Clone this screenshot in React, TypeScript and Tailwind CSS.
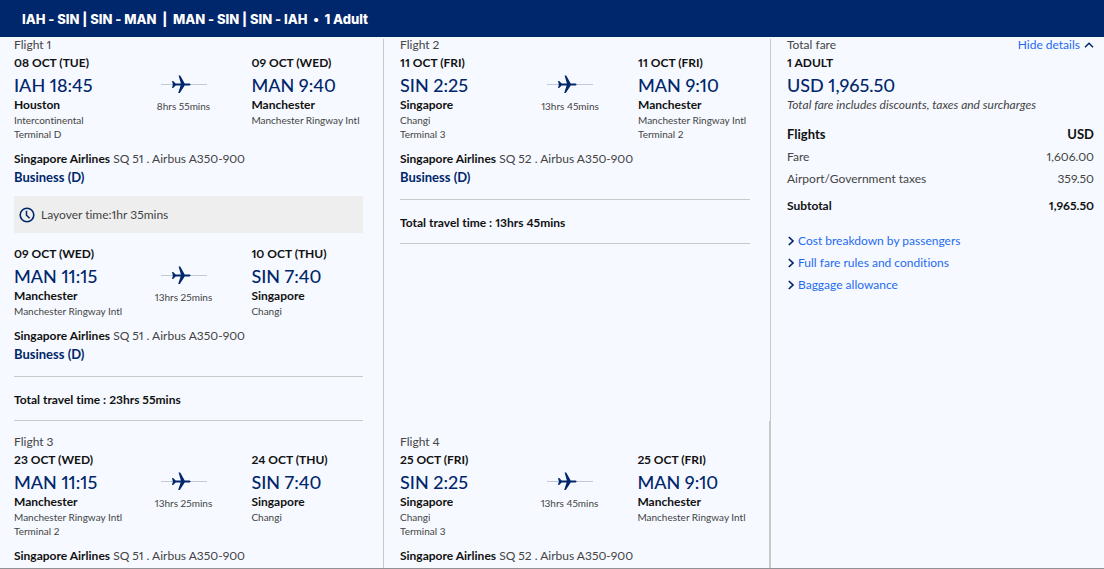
import React from 'react';

type Stop = { date: string; time: string; city: string; details: string[] };
type LegData = { from: Stop; to: Stop; duration: string; flightNo: string; cabin?: string };

const stop = (date: string, time: string, city: string, ...details: string[]): Stop => ({ date, time, city, details });

const flight1: LegData[] = [
  {
    from: stop('08 OCT (TUE)', 'IAH 18:45', 'Houston', 'Intercontinental', 'Terminal D'),
    to: stop('09 OCT (WED)', 'MAN 9:40', 'Manchester', 'Manchester Ringway Intl'),
    duration: '8hrs 55mins',
    flightNo: 'SQ 51',
    cabin: 'Business (D)',
  },
  {
    from: stop('09 OCT (WED)', 'MAN 11:15', 'Manchester', 'Manchester Ringway Intl'),
    to: stop('10 OCT (THU)', 'SIN 7:40', 'Singapore', 'Changi'),
    duration: '13hrs 25mins',
    flightNo: 'SQ 51',
    cabin: 'Business (D)',
  },
];

const flight2: LegData = {
  from: stop('11 OCT (FRI)', 'SIN 2:25', 'Singapore', 'Changi', 'Terminal 3'),
  to: stop('11 OCT (FRI)', 'MAN 9:10', 'Manchester', 'Manchester Ringway Intl', 'Terminal 2'),
  duration: '13hrs 45mins',
  flightNo: 'SQ 52',
  cabin: 'Business (D)',
};

const flight3: LegData = {
  from: stop('23 OCT (WED)', 'MAN 11:15', 'Manchester', 'Manchester Ringway Intl', 'Terminal 2'),
  to: stop('24 OCT (THU)', 'SIN 7:40', 'Singapore', 'Changi'),
  duration: '13hrs 25mins',
  flightNo: 'SQ 51',
};

const flight4: LegData = {
  from: stop('25 OCT (FRI)', 'SIN 2:25', 'Singapore', 'Changi', 'Terminal 3'),
  to: stop('25 OCT (FRI)', 'MAN 9:10', 'Manchester', 'Manchester Ringway Intl'),
  duration: '13hrs 45mins',
  flightNo: 'SQ 52',
};

function PlaneIcon() {
  return (
    <svg className="block h-5 w-[46px]" viewBox="0 0 46 20" aria-hidden="true">
      <path d="M0 10.5H46" stroke="#c3c9d6" />
      <path
        fill="#00266b"
        d="M11 7h1.1l2.6 2.6h5.2L17.6 1.6h1.6l4.5 8h3.8c1.3 0 2.1.4 2.1.9s-.8 1-2.1 1h-3.8L18.8 19h-1.6l2.4-7.5h-4.9L12.1 14H11l.9-3.5z"
      />
    </svg>
  );
}

function ClockIcon() {
  return (
    <svg className="h-4 w-4 shrink-0" viewBox="0 0 16 16" fill="none" stroke="#00266b" aria-hidden="true">
      <circle cx="8" cy="8" r="6.8" strokeWidth="1.6" />
      <path d="M7.5 3.8V8.2L10.6 11.3" strokeWidth="1.5" />
    </svg>
  );
}

function Chevron({ up = false }: { up?: boolean }) {
  return up ? (
    <svg className="h-2 w-2.5 shrink-0" viewBox="0 0 10 8" fill="none" stroke="#00266b" strokeWidth="1.5" aria-hidden="true">
      <path d="M1 6.2L5 2.2L9 6.2" />
    </svg>
  ) : (
    <svg className="h-2.5 w-2 shrink-0" viewBox="0 0 8 10" fill="none" stroke="#00266b" strokeWidth="1.7" aria-hidden="true">
      <path d="M1.8 1L6 5L1.8 9" />
    </svg>
  );
}

function StopInfo({ data }: { data: Stop }) {
  return (
    <div className="whitespace-nowrap">
      <p className="text-xs leading-5 font-bold text-[#111]">{data.date}</p>
      <p className="font-['Lato_Medium','Lato',sans-serif] text-lg leading-6 font-medium text-[#00266b]">{data.time}</p>
      <p className="text-xs leading-4 font-bold text-[#111]">{data.city}</p>
      {data.details.map((line) => (
        <p key={line} className="text-[10px] leading-[14px]">{line}</p>
      ))}
    </div>
  );
}

function Leg({ data }: { data: LegData }) {
  return (
    <div>
      <div className="grid grid-cols-[36fr_24fr_40fr]">
        <StopInfo data={data.from} />
        <div className="flex flex-col items-center pt-[21px] pl-1">
          <PlaneIcon />
          <p className="mt-[5px] text-[10px] leading-[14px] whitespace-nowrap">{data.duration}</p>
        </div>
        <div className="pl-7">
          <StopInfo data={data.to} />
        </div>
      </div>
      <p className="mt-2.5 text-xs leading-4">
        <b className="font-bold text-[#111]">Singapore Airlines</b> {data.flightNo} . Airbus A350-900
      </p>
      {data.cabin && <p className="text-[13px] leading-5 font-bold text-[#00266b]">{data.cabin}</p>}
    </div>
  );
}

function FlightTitle({ children }: { children: React.ReactNode }) {
  return <h2 className="mb-0.5 text-xs leading-3">{children}</h2>;
}

function TravelTime({ value }: { value: string }) {
  return (
    <p className="mt-3 border-y border-[#c9c9c9] pt-3.5 pb-3 text-xs leading-[17px] font-bold text-[#111]">
      Total travel time : {value}
    </p>
  );
}

const links = ['Cost breakdown by passengers', 'Full fare rules and conditions', 'Baggage allowance'];

export default function App() {
  return (
    <div className="border-b border-[#8f9196] bg-[#f6f9ff] font-['Lato',sans-serif] text-[#444] proportional-nums [font-variant-ligatures:none]">
      <header className="flex h-[37px] items-center bg-[#00266b] px-[22px]">
        <h1 className="font-['Inter','Lato',sans-serif] text-[13px] leading-4 font-extrabold whitespace-pre text-white">
          {'IAH - SIN | SIN - MAN  |  MAN - SIN | SIN - IAH  •  1 Adult'}
        </h1>
      </header>
      <main className="grid grid-cols-[384fr_387fr_333fr] pt-0.5">
        <section className="border-r border-[#c9c9c9] pr-5 pl-3.5">
          <FlightTitle>Flight 1</FlightTitle>
          <Leg data={flight1[0]} />
          <div className="mt-[9px] mb-[11px] flex h-[37px] items-center gap-1.5 bg-[#eee] px-[5px] text-xs">
            <ClockIcon />
            <p>Layover time:1hr 35mins</p>
          </div>
          <Leg data={flight1[1]} />
          <TravelTime value="23hrs 55mins" />
        </section>

        <section className="border-r border-[#c9c9c9] pr-5 pl-4">
          <FlightTitle>Flight 2</FlightTitle>
          <Leg data={flight2} />
          <TravelTime value="13hrs 45mins" />
        </section>

        <aside className="row-span-2 pr-2.5 pl-4 text-xs">
          <div className="mb-0.5 flex items-center justify-between leading-3">
            <h2>Total fare</h2>
            <button type="button" className="flex items-center gap-1 text-[#1f6bf0]">
              Hide details <Chevron up />
            </button>
          </div>
          <p className="leading-5 font-bold text-[#111]">1 ADULT</p>
          <p className="font-['Lato_Medium','Lato',sans-serif] text-lg leading-6 font-medium text-[#00266b]">USD 1,965.50</p>
          <p className="leading-4 italic">Total fare includes discounts, taxes and surcharges</p>
          <table className="mt-2.5 w-full leading-[22px]">
            <thead>
              <tr className="text-[13px] text-[#111]">
                <th scope="col" className="pb-px text-left font-bold">Flights</th>
                <th scope="col" className="pb-px text-right font-bold">USD</th>
              </tr>
            </thead>
            <tbody>
              <tr>
                <td>Fare</td>
                <td className="text-right">1,606.00</td>
              </tr>
              <tr>
                <td>Airport/Government taxes</td>
                <td className="text-right">359.50</td>
              </tr>
            </tbody>
            <tfoot>
              <tr className="text-[#111]">
                <th scope="row" className="pt-[5px] text-left font-bold">Subtotal</th>
                <td className="pt-[5px] text-right font-bold">1,965.50</td>
              </tr>
            </tfoot>
          </table>
          <ul className="mt-[13px] leading-[22px]">
            {links.map((label) => (
              <li key={label}>
                <a href="#" className="flex items-center gap-[3px] text-[#1f6bf0]">
                  <Chevron />
                  {label}
                </a>
              </li>
            ))}
          </ul>
        </aside>

        <section className="border-r border-[#c9c9c9] pt-[15px] pr-5 pb-1 pl-3.5">
          <FlightTitle>Flight 3</FlightTitle>
          <Leg data={flight3} />
        </section>

        <section className="border-r-2 border-[#c9c9c9] pt-[15px] pr-5 pb-1 pl-4">
          <FlightTitle>Flight 4</FlightTitle>
          <Leg data={flight4} />
        </section>
      </main>
    </div>
  );
}
